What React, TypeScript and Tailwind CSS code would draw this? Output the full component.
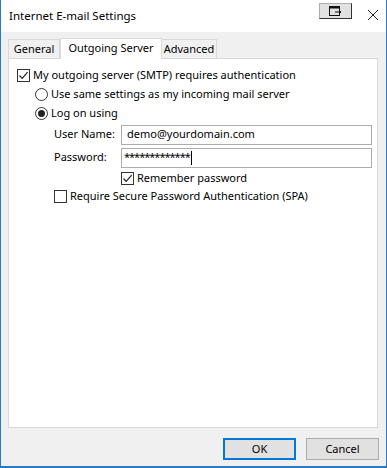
import React from "react";

const font = { fontFamily: '"Noto Sans", "Open Sans", sans-serif' };

const CheckBox = ({ checked }: { checked?: boolean }) => (
  <div className="w-[13px] h-[13px] border border-[#333] bg-white flex items-center justify-center shrink-0">
    {checked && (
      <svg width="11" height="11" viewBox="0 0 11 11">
        <path d="M1.5 5.5 L4.2 8.3 L9.6 2.2" fill="none" stroke="#222" strokeWidth="1.2" />
      </svg>
    )}
  </div>
);

const Radio = ({ checked }: { checked?: boolean }) => (
  <div className="w-[13px] h-[13px] rounded-full border border-[#333] bg-white flex items-center justify-center shrink-0">
    {checked && <div className="w-[7px] h-[7px] rounded-full bg-[#222]" />}
  </div>
);

const App = () => {
  return (
    <div
      className="w-[387px] h-[468px] flex flex-col bg-[#f0f0f0] border-l border-r border-b-2 border-[#2b79c2] text-[11px] text-black overflow-hidden whitespace-nowrap"
      style={font}
    >
      {/* title bar */}
      <div className="h-[32px] bg-white flex items-center pl-[8px] shrink-0 relative">
        <span className="text-[11.5px]">Internet E-mail Settings</span>
        <div className="absolute left-[318px] top-[3px] w-[33px] h-[16px] bg-[#e1e1e1] border border-[#adadad] border-b-[#333] border-r-[#333] flex items-center justify-center">
          <svg width="13" height="10" viewBox="0 0 13 10">
            <rect x="0.5" y="0.5" width="10" height="9" fill="none" stroke="#111" />
            <rect x="0.5" y="0.5" width="10" height="2" fill="#111" />
            <path d="M6 6 H12 M10 4 L12 6 L10 8" fill="none" stroke="#111" />
          </svg>
        </div>
        <svg className="absolute left-[366px] top-[9px]" width="12" height="12" viewBox="0 0 12 12">
          <path d="M1 1 L11 11 M11 1 L1 11" stroke="#222" strokeWidth="1" />
        </svg>
      </div>

      {/* tabs */}
      <div className="px-[7px] pt-[5px] flex-1 flex flex-col">
        <div className="flex items-end h-[21px] relative z-10">
          <div className="w-[52px] h-[19px] flex items-center justify-center border border-[#d9d9d9] border-b-0 bg-[#f0f0f0]">
            General
          </div>
          <div className="w-[102px] h-[21px] flex items-center justify-center border border-[#d9d9d9] border-b-0 bg-white -mb-[1px] pb-[2px]">
            Outgoing Server
          </div>
          <div className="w-[55px] h-[19px] flex items-center justify-center border border-[#d9d9d9] border-b-0 border-l-0 bg-[#f0f0f0]">
            Advanced
          </div>
        </div>
        <div className="h-[370px] bg-white border border-[#d9d9d9] mr-[1px] pl-[8px] pt-[7px] flex flex-col">
          <div className="flex items-center gap-[3px] h-[18px]">
            <CheckBox checked />
            <span>My outgoing server (SMTP) requires authentication</span>
          </div>
          <div className="pl-[18px] flex flex-col">
            <div className="flex items-center gap-[3px] h-[19px] mt-[1px]">
              <Radio />
              <span>Use same settings as my incoming mail server</span>
            </div>
            <div className="flex items-center gap-[3px] h-[19px]">
              <Radio checked />
              <span>Log on using</span>
            </div>
            <div className="pl-[19px] flex flex-col">
              <div className="flex items-center h-[21px] mt-[1px]">
                <span className="w-[67px]">User Name:</span>
                <div className="w-[251px] h-[20px] border border-[#acacac] bg-white flex items-center pl-[5px]">
                  demo@yourdomain.com
                </div>
              </div>
              <div className="flex items-center h-[21px] mt-[2px]">
                <span className="w-[67px]">Password:</span>
                <div className="w-[251px] h-[20px] border border-[#acacac] bg-white flex items-center pl-[2px]">
                  <span className="tracking-[-1px]">*************</span>
                  <span className="w-[1px] h-[14px] bg-black ml-[1px]" />
                </div>
              </div>
              <div className="flex items-center gap-[3px] h-[18px] mt-[1px] pl-[67px]">
                <CheckBox checked />
                <span>Remember password</span>
              </div>
              <div className="flex items-center gap-[3px] h-[18px]">
                <CheckBox />
                <span>Require Secure Password Authentication (SPA)</span>
              </div>
            </div>
          </div>
        </div>

        {/* buttons */}
        <div className="flex justify-end gap-[10px] mt-[10px]">
          <button className="w-[73px] h-[22px] bg-[#e1e1e1] border-2 border-[#0078d7] flex items-center justify-center">
            OK
          </button>
          <button className="w-[73px] h-[22px] bg-[#e1e1e1] border border-[#adadad] flex items-center justify-center">
            Cancel
          </button>
        </div>
      </div>
    </div>
  );
};

export default App;
